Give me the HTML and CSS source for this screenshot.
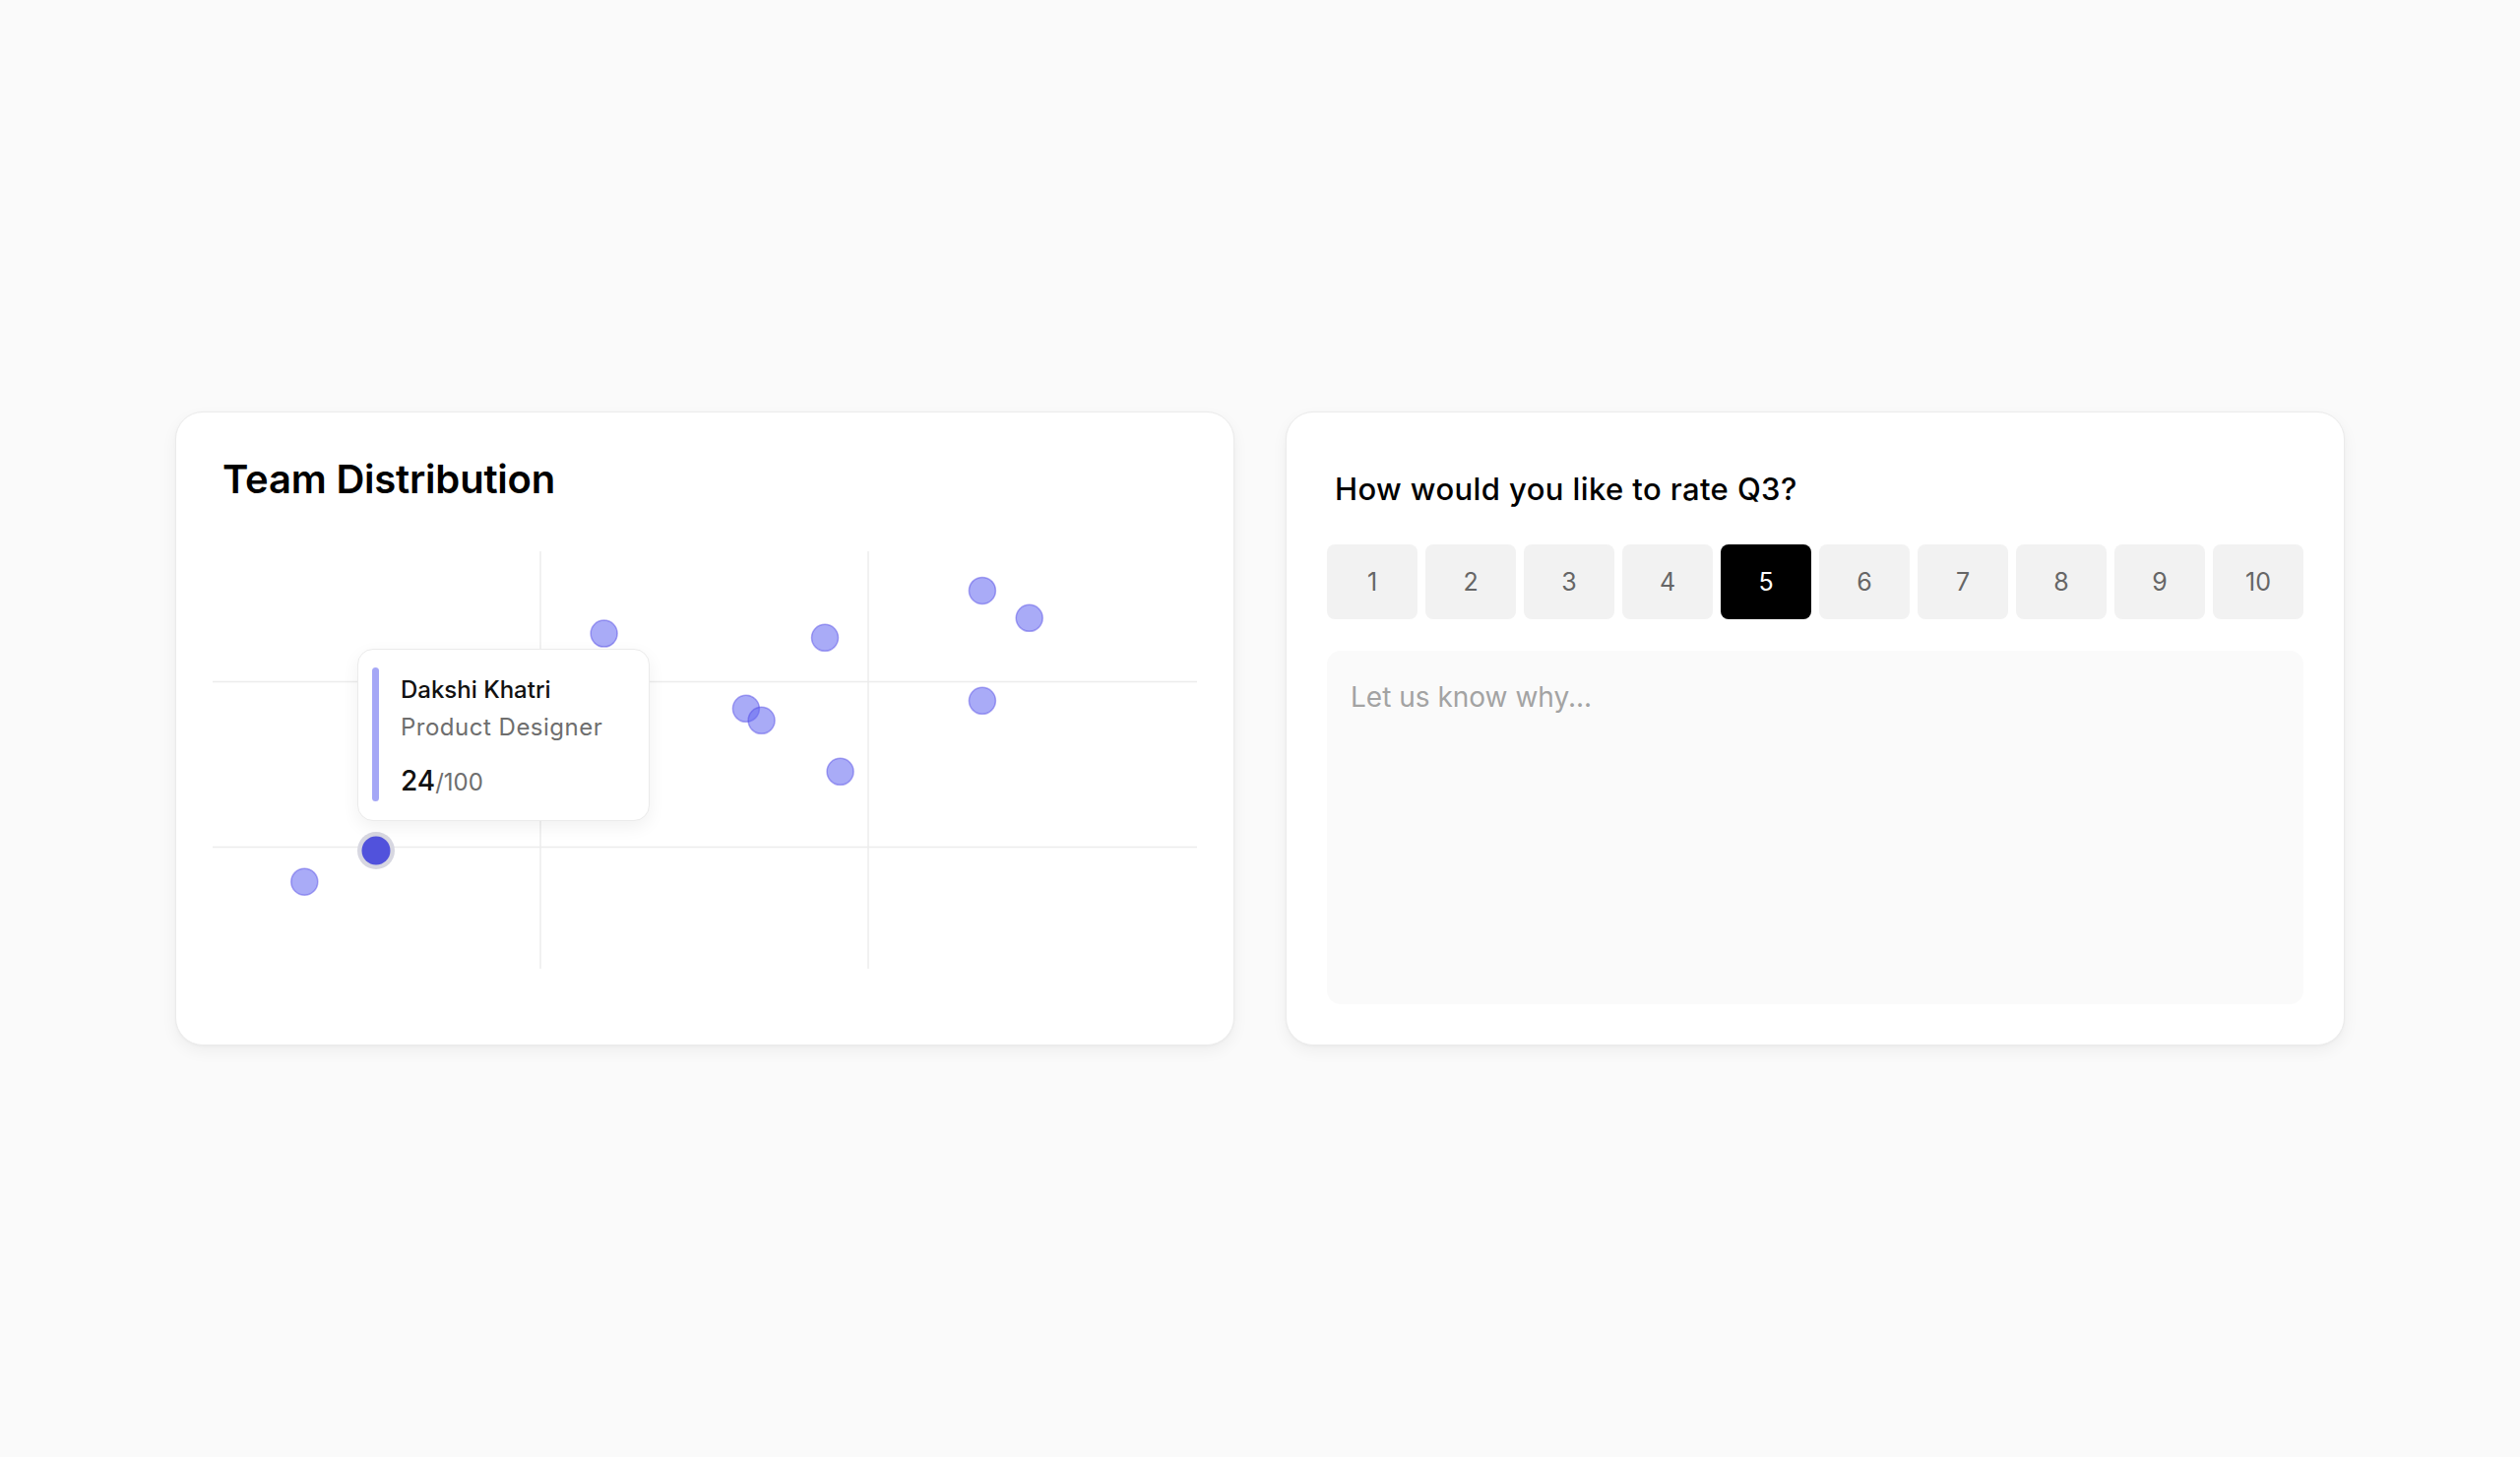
FILE: index.html
```html
<!DOCTYPE html>
<html lang="en">
<head>
<meta charset="utf-8">
<title>Team Distribution</title>
<link rel="stylesheet" href="styles.css">
</head>
<body>
<main class="page">
  <section class="card chart-card">
    <h2 class="chart-title">Team Distribution</h2>
    <div class="chart">
      <svg class="chart-svg" width="1000" height="424" viewBox="0 0 1000 424">
        <g class="grid">
          <line x1="333" y1="0" x2="333" y2="424"/>
          <line x1="666" y1="0" x2="666" y2="424"/>
          <line x1="0" y1="132.5" x2="1000" y2="132.5"/>
          <line x1="0" y1="300.6" x2="1000" y2="300.6"/>
        </g>
        <g class="dots">
          <circle cx="397.6" cy="83.6" r="13.5"/>
          <circle cx="622" cy="87.8" r="13.5"/>
          <circle cx="781.9" cy="39.9" r="13.5"/>
          <circle cx="829.7" cy="67.8" r="13.5"/>
          <circle cx="541.9" cy="159.8" r="13.5"/>
          <circle cx="557.6" cy="171.8" r="13.5"/>
          <circle cx="781.9" cy="151.8" r="13.5"/>
          <circle cx="637.6" cy="223.8" r="13.5"/>
          <circle cx="93.3" cy="335.7" r="13.5"/>
        </g>
        <circle class="dot-halo" cx="166" cy="304" r="19"/>
        <circle class="dot-active" cx="166" cy="304" r="14.5"/>
      </svg>
      <div class="tooltip">
        <span class="tooltip-bar"></span>
        <div class="tooltip-body">
          <div class="tooltip-name">Dakshi Khatri</div>
          <div class="tooltip-role">Product Designer</div>
          <div class="tooltip-score"><span class="score-value">24</span><span class="score-max">/100</span></div>
        </div>
      </div>
    </div>
  </section>

  <section class="card rating-card">
    <h2 class="rating-title">How would you like to rate Q3?</h2>
    <div class="rating-scale">
      <button class="rate-btn">1</button>
      <button class="rate-btn">2</button>
      <button class="rate-btn">3</button>
      <button class="rate-btn">4</button>
      <button class="rate-btn is-selected">5</button>
      <button class="rate-btn">6</button>
      <button class="rate-btn">7</button>
      <button class="rate-btn">8</button>
      <button class="rate-btn">9</button>
      <button class="rate-btn">10</button>
    </div>
    <textarea class="feedback" placeholder="Let us know why..."></textarea>
  </section>
</main>
</body>
</html>
```

FILE: styles.css
```css
* {
  box-sizing: border-box;
}

html, body {
  margin: 0;
  padding: 0;
  background: #fafafa;
  font-family: Inter, "Noto Sans", "Liberation Sans", sans-serif;
  color: #000;
}

.page {
  height: 100vh;
  display: flex;
  align-items: center;
  justify-content: center;
  gap: 52px;
}

.card {
  width: 1076px;
  height: 644px;
  background: #ffffff;
  border: 1px solid #ebebeb;
  border-radius: 28px;
  box-shadow: 0 6px 16px rgba(0, 0, 0, 0.05), 0 1px 3px rgba(0, 0, 0, 0.03);
}

/* Chart card */
.chart-card {
  padding: 43.5px 37px 0 37px;
}

.chart-title {
  margin: 0;
  padding-left: 10px;
  font-size: 40px;
  line-height: 48px;
  font-weight: 600;
  letter-spacing: -0.2px;
}

.chart {
  position: relative;
  width: 1000px;
  height: 424px;
  margin-top: 49.5px;
}

.chart-svg {
  display: block;
}

.grid line {
  stroke: #ececec;
  stroke-width: 1.5;
}

.dots circle {
  fill: #6366f1;
  fill-opacity: 0.55;
  stroke: #4f46e5;
  stroke-opacity: 0.45;
  stroke-width: 1.5;
}

.dot-halo {
  fill: #d7d7e1;
}

.dot-active {
  fill: #5152dc;
}

.tooltip {
  position: absolute;
  left: 147px;
  top: 99px;
  width: 297px;
  height: 175px;
  display: flex;
  gap: 22px;
  padding: 18px 20px 19px 14px;
  background: #ffffff;
  border: 1px solid #ebebeb;
  border-radius: 16px;
  box-shadow: 0 6px 18px rgba(0, 0, 0, 0.06);
}

.tooltip-bar {
  width: 7px;
  border-radius: 4px;
  background: #a5a7f6;
  flex: none;
}

.tooltip-body {
  display: flex;
  flex-direction: column;
  padding-top: 6.5px;
}

.tooltip-name {
  font-size: 24px;
  line-height: 32px;
  font-weight: 500;
  color: #111;
}

.tooltip-role {
  margin-top: 6px;
  font-size: 24px;
  line-height: 32px;
  font-weight: 400;
  color: #6e6e6e;
  letter-spacing: 0.5px;
}

.tooltip-score {
  margin-top: 20px;
  line-height: 36px;
}

.score-value {
  font-size: 28px;
  font-weight: 500;
  color: #111;
}

.score-max {
  font-size: 24px;
  color: #6e6e6e;
}

/* Rating card */
.rating-card {
  padding: 41px;
  display: flex;
  flex-direction: column;
}

.rating-title {
  margin: 14px 0 0 0;
  padding-left: 8px;
  font-size: 31px;
  line-height: 45px;
  font-weight: 500;
  letter-spacing: 0.4px;
}

.rating-scale {
  margin-top: 33.5px;
  display: grid;
  grid-template-columns: repeat(10, 1fr);
  gap: 8px;
}

.rate-btn {
  height: 76px;
  border: none;
  border-radius: 8px;
  background: #f2f2f2;
  color: #666666;
  font-family: Inter, "Noto Sans", "Liberation Sans", sans-serif;
  font-size: 25px;
  font-weight: 400;
  padding: 0;
}

.rate-btn.is-selected {
  background: #000000;
  color: #ffffff;
}

.feedback {
  margin-top: 32px;
  flex: 1;
  width: 100%;
  resize: none;
  border: none;
  outline: none;
  border-radius: 14px;
  background: #fafafa;
  padding: 26.5px 24px 25px 24px;
  font-family: Inter, "Noto Sans", "Liberation Sans", sans-serif;
  font-size: 28px;
  line-height: 42px;
  color: #333;
}

.feedback::placeholder {
  color: #a3a3a3;
}
```
